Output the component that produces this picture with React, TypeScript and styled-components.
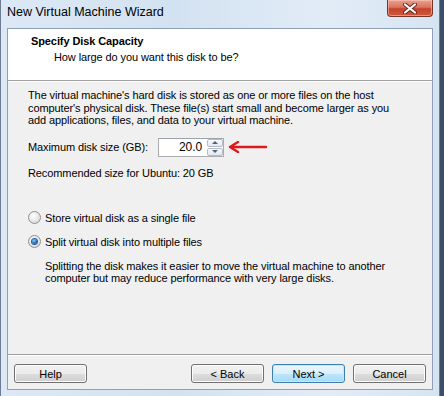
import styled, { createGlobalStyle } from "styled-components";

const GlobalStyle = createGlobalStyle`
	html, body {
		margin: 0;
		padding: 0;
		background: #3d4f66;
	}
	body {
		font-family: "Liberation Sans", Arial, sans-serif;
		font-size: 11px;
		letter-spacing: -0.1px;
		color: #000;
	}
`;

const CloseIcon = () => (
	<svg width="14" height="11" viewBox="0 0 14 11">
		<path d="M2 1.5 L12 9.5 M12 1.5 L2 9.5" stroke="#5a2a22" strokeWidth="4" strokeLinecap="round" />
		<path d="M2 1.5 L12 9.5 M12 1.5 L2 9.5" stroke="#ffffff" strokeWidth="2.2" strokeLinecap="round" />
	</svg>
);

const PointerArrow = () => (
	<svg width="40" height="12" viewBox="0 0 40 12">
		<path d="M38 6 H5" stroke="#e0191b" strokeWidth="2.4" strokeLinecap="round" />
		<path d="M10 1 L2 6 L10 11" stroke="#e0191b" strokeWidth="2.4" fill="none" strokeLinecap="round" strokeLinejoin="round" />
	</svg>
);

const App = () => {
	return (
		<>
			<GlobalStyle />
			<Window>
				<TitleBar>
					<TitleText>New Virtual Machine Wizard</TitleText>
					<CloseButton>
						<CloseIcon />
					</CloseButton>
				</TitleBar>
				<Client>
					<Header>
						<HeaderTitle>Specify Disk Capacity</HeaderTitle>
						<HeaderSub>How large do you want this disk to be?</HeaderSub>
					</Header>
					<Body>
						<Paragraph>
							The virtual machine's hard disk is stored as one or more files on the host
							<br />
							computer's physical disk. These file(s) start small and become larger as you
							<br />
							add applications, files, and data to your virtual machine.
						</Paragraph>
						<SizeRow>
							<SizeLabel>Maximum disk size (GB):</SizeLabel>
							<SpinBox>
								<SpinValue>20.0</SpinValue>
								<SpinButtons>
									<SpinButton>
										<Triangle $up />
									</SpinButton>
									<SpinButton>
										<Triangle />
									</SpinButton>
								</SpinButtons>
							</SpinBox>
							<PointerArrow />
						</SizeRow>
						<Recommended>Recommended size for Ubuntu: 20 GB</Recommended>
						<RadioGroup>
							<RadioRow>
								<Radio />
								<span>Store virtual disk as a single file</span>
							</RadioRow>
							<RadioRow>
								<Radio $checked />
								<span>Split virtual disk into multiple files</span>
							</RadioRow>
							<RadioNote>
								Splitting the disk makes it easier to move the virtual machine to another
								<br />
								computer but may reduce performance with very large disks.
							</RadioNote>
						</RadioGroup>
					</Body>
					<Footer>
						<Button>Help</Button>
						<Spacer />
						<Button>&lt; Back</Button>
						<Button $default>Next &gt;</Button>
						<Button>Cancel</Button>
					</Footer>
				</Client>
			</Window>
		</>
	);
};

const Window = styled.div`
	width: 440px;
	height: 396px;
	box-sizing: border-box;
	background: linear-gradient(90deg, #dce8f5 0%, #d3e2f1 40%, #e2ecf7 75%, #d6e4f2 100%);
	border-left: 1px solid #6b7b90;
	border-right: 1px solid #6b7b90;
	display: flex;
	flex-direction: column;
`;

const TitleBar = styled.div`
	height: 28px;
	display: flex;
	align-items: flex-start;
	padding-left: 6px;
	padding-right: 6px;
`;

const TitleText = styled.div`
	font-family: "Liberation Sans", Arial, sans-serif;
	font-size: 12.5px;
	letter-spacing: 0;
	line-height: 25px;
	color: #000;
	flex: 1;
`;

const CloseButton = styled.div`
	width: 46px;
	height: 17px;
	box-sizing: border-box;
	border: 1px solid #7a3426;
	border-top: none;
	border-radius: 0 0 4px 4px;
	background: linear-gradient(180deg, #e9a08f 0%, #d9755f 45%, #c4432b 55%, #d0583c 100%);
	display: flex;
	align-items: center;
	justify-content: center;
	box-shadow: inset 0 0 0 1px rgba(255, 210, 200, 0.5);
`;

const Client = styled.div`
	margin: 0 6px;
	height: 362px;
	background: #f0f0f0;
	border: 1px solid #8da0b8;
	box-sizing: border-box;
	display: flex;
	flex-direction: column;
`;

const Header = styled.div`
	height: 52px;
	background: #ffffff;
	border-bottom: 1px solid #a0a0a0;
	box-shadow: 0 1px 0 #ffffff;
	padding: 6px 0 0 23px;
	box-sizing: border-box;
`;

const HeaderTitle = styled.div`
	font-weight: bold;
	font-size: 11px;
	line-height: 13px;
`;

const HeaderSub = styled.div`
	padding-left: 23px;
	margin-top: 3px;
	line-height: 13px;
`;

const Body = styled.div`
	flex: 1;
	padding: 8px 0 0 20px;
`;

const Paragraph = styled.div`
	line-height: 12.5px;
`;

const SizeRow = styled.div`
	display: flex;
	align-items: center;
	margin-top: 11px;
	gap: 4px;
`;

const SizeLabel = styled.div`
	width: 126px;
`;

const SpinBox = styled.div`
	width: 66px;
	height: 19px;
	box-sizing: border-box;
	border: 1px solid #abadb3;
	border-top-color: #9da3ad;
	background: #fff;
	display: flex;
`;

const SpinValue = styled.div`
	flex: 1;
	text-align: right;
	padding-right: 4px;
	line-height: 17px;
	font-size: 12px;
`;

const SpinButtons = styled.div`
	width: 16px;
	display: flex;
	flex-direction: column;
	gap: 1px;
	padding: 0 0 0 1px;
`;

const SpinButton = styled.div`
	flex: 1;
	border: 1px solid #b5bcc7;
	border-radius: 2px;
	background: linear-gradient(180deg, #f7f9fb 0%, #e3e8ee 100%);
	display: flex;
	align-items: center;
	justify-content: center;
`;

const Triangle = styled.div<{ $up?: boolean }>`
	width: 0;
	height: 0;
	border-left: 3px solid transparent;
	border-right: 3px solid transparent;
	${({ $up }) => ($up ? "border-bottom: 3px solid #4d6185;" : "border-top: 3px solid #4d6185;")}
`;

const Recommended = styled.div`
	margin-top: 10px;
	line-height: 13px;
`;

const RadioGroup = styled.div`
	margin-top: 26px;
	display: flex;
	flex-direction: column;
`;

const RadioRow = styled.div`
	display: flex;
	align-items: center;
	gap: 4px;
	height: 24px;
`;

const Radio = styled.span<{ $checked?: boolean }>`
	width: 13px;
	height: 13px;
	box-sizing: border-box;
	border-radius: 50%;
	border: 1px solid #8f8f8f;
	background: radial-gradient(circle at 40% 35%, #ffffff 0%, #e6e6e6 55%, #cfcfcf 100%);
	display: flex;
	align-items: center;
	justify-content: center;

	&::after {
		content: "";
		width: 5px;
		height: 5px;
		border-radius: 50%;
		display: ${({ $checked }) => ($checked ? "block" : "none")};
		background: radial-gradient(circle at 40% 35%, #8ad0ff 0%, #1b63b8 60%, #0d3f7f 100%);
		box-shadow: 0 0 0 1px #2c5e96;
	}
`;

const RadioNote = styled.div`
	padding-left: 17px;
	margin-top: 6px;
	line-height: 12px;
`;

const Footer = styled.div`
	height: 35px;
	border-top: 1px solid #a0a0a0;
	box-shadow: inset 0 1px 0 #ffffff;
	display: flex;
	align-items: flex-start;
	gap: 8px;
	padding: 9px 6px 0 6px;
	box-sizing: border-box;
`;

const Spacer = styled.div`
	flex: 1;
`;

const Button = styled.button<{ $default?: boolean }>`
	width: 73px;
	height: 19px;
	padding: 0;
	font-family: "Liberation Sans", Arial, sans-serif;
	font-size: 11px;
	color: #000;
	border-radius: 3px;
	border: 1px solid ${({ $default }) => ($default ? "#3c7fb1" : "#707070")};
	background: ${({ $default }) =>
		$default
			? "linear-gradient(180deg, #eaf6fd 0%, #d9f0fc 50%, #bee6fd 51%, #a7d9f5 100%)"
			: "linear-gradient(180deg, #f2f2f2 0%, #ebebeb 50%, #dddddd 51%, #cfcfcf 100%)"};
	box-shadow: inset 0 0 0 1px ${({ $default }) => ($default ? "#c8e8f9" : "#fcfcfc")};
`;

export default App;
